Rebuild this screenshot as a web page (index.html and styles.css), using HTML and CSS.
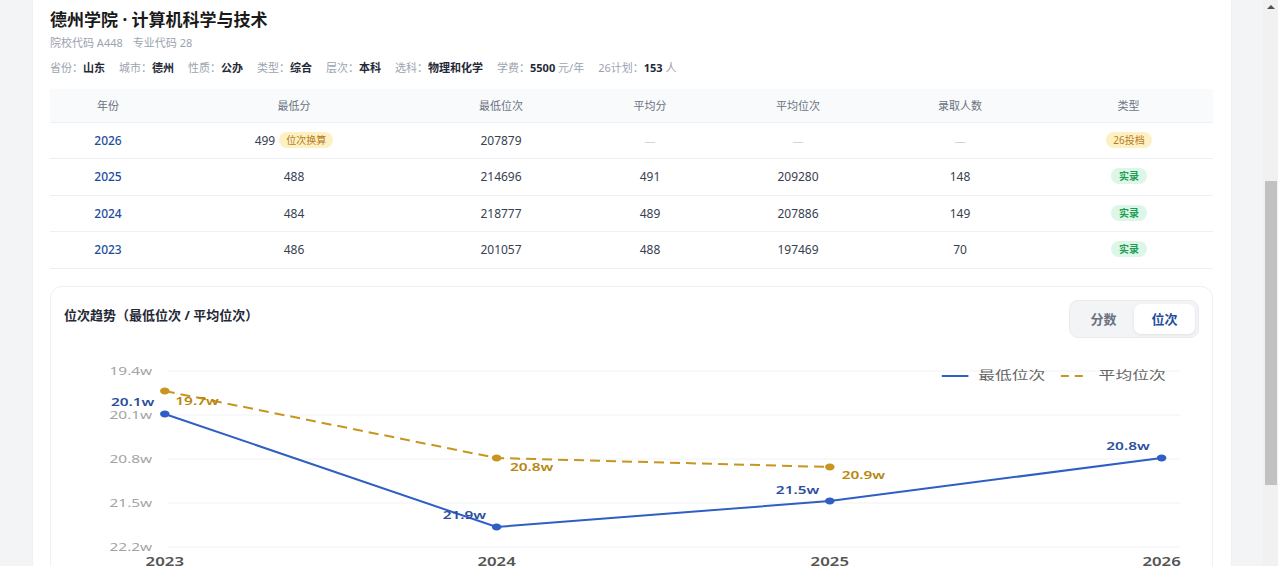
FILE: index.html
```html
<!DOCTYPE html>
<html lang="zh-CN">
<head>
<meta charset="utf-8">
<title>德州学院 · 计算机科学与技术</title>
<link rel="stylesheet" href="styles.css">
</head>
<body>
<div class="page">
  <div class="main">
    <div class="card">
      <h1 class="title">德州学院 · 计算机科学与技术</h1>
      <div class="codes"><span>院校代码 A448</span><span>专业代码 28</span></div>
      <div class="info">
        <span><i>省份：</i><b>山东</b></span>
        <span><i>城市：</i><b>德州</b></span>
        <span><i>性质：</i><b>公办</b></span>
        <span><i>类型：</i><b>综合</b></span>
        <span><i>层次：</i><b>本科</b></span>
        <span><i>选科：</i><b>物理和化学</b></span>
        <span><i>学费：</i><b>5500</b> <i>元/年</i></span>
        <span><i>26计划：</i><b>153</b> <i>人</i></span>
      </div>

      <table class="tbl">
        <colgroup>
          <col class="c1"><col class="c2"><col class="c3"><col class="c4"><col class="c5"><col class="c6"><col class="c7">
        </colgroup>
        <thead>
          <tr><th>年份</th><th>最低分</th><th>最低位次</th><th>平均分</th><th>平均位次</th><th>录取人数</th><th>类型</th></tr>
        </thead>
        <tbody>
          <tr><td class="yr">2026</td><td>499 <span class="chip chip-y">位次换算</span></td><td>207879</td><td class="dash">—</td><td class="dash">—</td><td class="dash">—</td><td><span class="chip chip-y">26投档</span></td></tr>
          <tr><td class="yr">2025</td><td>488</td><td>214696</td><td>491</td><td>209280</td><td>148</td><td><span class="chip chip-g">实录</span></td></tr>
          <tr><td class="yr">2024</td><td>484</td><td>218777</td><td>489</td><td>207886</td><td>149</td><td><span class="chip chip-g">实录</span></td></tr>
          <tr><td class="yr">2023</td><td>486</td><td>201057</td><td>488</td><td>197469</td><td>70</td><td><span class="chip chip-g">实录</span></td></tr>
        </tbody>
      </table>

      <div class="chart-card">
        <div class="chart-head">
          <h2 class="chart-title">位次趋势（最低位次 / 平均位次）</h2>
          <div class="toggle">
            <span class="tg">分数</span>
            <span class="tg tg-on">位次</span>
          </div>
        </div>
        <svg class="chart" width="1134" height="230" viewBox="0 0 810 230" preserveAspectRatio="none">
          <g class="grid">
            <line x1="74" y1="24" x2="797" y2="24"/>
            <line x1="74" y1="68" x2="797" y2="68"/>
            <line x1="74" y1="112" x2="797" y2="112"/>
            <line x1="74" y1="156" x2="797" y2="156"/>
            <line x1="74" y1="200" x2="797" y2="200"/>
          </g>
          <g class="ylab">
            <text x="63" y="28">19.4w</text>
            <text x="63" y="72">20.1w</text>
            <text x="63" y="116">20.8w</text>
            <text x="63" y="160">21.5w</text>
            <text x="63" y="204">22.2w</text>
          </g>
          <g class="xlab">
            <text x="72" y="219">2023</text>
            <text x="309" y="219">2024</text>
            <text x="547" y="219">2025</text>
            <text x="784" y="219">2026</text>
          </g>
          <polyline class="ln-avg" points="72,44 309,111 547,120"/>
          <polyline class="ln-min" points="72,67 309,180 547,154 784,111"/>
          <g class="dot-avg">
            <circle cx="72" cy="44" r="3.4"/>
            <circle cx="309" cy="111" r="3.4"/>
            <circle cx="547" cy="120" r="3.4"/>
          </g>
          <g class="dot-min">
            <circle cx="72" cy="67" r="3.4"/>
            <circle cx="309" cy="180" r="3.4"/>
            <circle cx="547" cy="154" r="3.4"/>
            <circle cx="784" cy="111" r="3.4"/>
          </g>
          <g class="lab-min">
            <text x="49" y="59">20.1w</text>
            <text x="286" y="172">21.9w</text>
            <text x="524" y="147">21.5w</text>
            <text x="760" y="103">20.8w</text>
          </g>
          <g class="lab-avg">
            <text x="95" y="58">19.7w</text>
            <text x="334" y="124">20.8w</text>
            <text x="571" y="132">20.9w</text>
          </g>
          <g class="legend">
            <line class="lg-min" x1="627" y1="29" x2="646" y2="29"/>
            <text x="653" y="33">最低位次</text>
            <line class="lg-avg" x1="712" y1="29" x2="730" y2="29"/>
            <text x="739" y="33">平均位次</text>
          </g>
        </svg>
      </div>
    </div>
  </div>
  <div class="scrollbar">
    <div class="sb-arrow"></div>
    <div class="sb-thumb"></div>
  </div>
</div>
</body>
</html>
```

FILE: styles.css
```css
* { box-sizing: border-box; }
html, body { margin: 0; padding: 0; }
body {
  font-family: "Noto Sans", "Noto Sans CJK SC", sans-serif;
  color: #1f2937;
  background: #f3f4f6;
}
.page {
  display: flex;
  width: 1278px;
  height: 566px;
  overflow: hidden;
}
.main {
  flex: 1;
  background: #f3f4f6;
  padding: 0 32px 0 33px;
  overflow: hidden;
}
.card {
  background: #fff;
  padding: 8px 18px 20px 17px;
  min-height: 700px;
  box-shadow: 0 0 2px rgba(0,0,0,0.05);
}
.title {
  margin: 0;
  font-size: 17px;
  line-height: 24px;
  font-weight: 700;
  color: #1a1a1a;
}
.codes {
  margin-top: 3px;
  font-size: 11px;
  line-height: 16px;
  color: #9ca3af;
  display: flex;
  gap: 10px;
}
.info {
  margin-top: 9px;
  font-size: 11px;
  line-height: 16px;
  display: flex;
  gap: 14px;
}
.info i { font-style: normal; color: #9ca3af; }
.info b { font-weight: 700; color: #1f2937; }

.tbl {
  margin-top: 13px;
  width: 1163px;
  border-collapse: collapse;
  table-layout: fixed;
  font-size: 12px;
}
.c1 { width: 116px; }
.c2 { width: 256px; }
.c3 { width: 158px; }
.c4 { width: 140px; }
.c5 { width: 156px; }
.c6 { width: 168px; }
.c7 { width: 169px; }
.tbl th {
  height: 33px;
  background: #f8fafc;
  color: #6b7280;
  font-size: 11px;
  font-weight: 400;
  border-bottom: 1px solid #edf0f4;
  padding: 0;
  text-align: center;
}
.tbl td {
  height: 36.5px;
  padding: 0;
  text-align: center;
  color: #374151;
  border-bottom: 1px solid #eceff3;
}
.tbl td.yr { color: #1e4d9b; font-weight: 500; }
.tbl td.dash { color: #d1d5db; font-size: 11px; }
.chip {
  display: inline-block;
  font-size: 10px;
  line-height: 16px;
  height: 16px;
  padding: 0 7px;
  border-radius: 999px;
  vertical-align: 1px;
  margin-left: 1px;
}
.chip-y { background: #fdf1c4; color: #b7791f; }
.chip-g { background: #dcf7e7; color: #1f9d55; font-weight: 700; padding: 0 8px; }

.chart-card {
  margin-top: 17px;
  border: 1px solid #edf0f4;
  border-radius: 12px;
  padding: 13px 13px 0 13px;
  height: 320px;
  overflow: hidden;
}
.chart-head {
  display: flex;
  justify-content: space-between;
  align-items: flex-start;
}
.chart-title {
  margin: 5px 0 0 0;
  font-size: 13px;
  line-height: 20px;
  font-weight: 700;
  color: #1f2937;
}
.toggle {
  display: flex;
  width: 130px;
  height: 38px;
  padding: 3px;
  background: #f3f4f6;
  border: 1px solid #e8ebf0;
  border-radius: 9px;
}
.tg {
  flex: 1;
  display: flex;
  align-items: center;
  justify-content: center;
  font-size: 13px;
  font-weight: 600;
  color: #6b7280;
  border-radius: 7px;
}
.tg-on {
  background: #fff;
  color: #1e4d9b;
  font-weight: 700;
  box-shadow: 0 1px 3px rgba(0,0,0,0.08);
}
.chart {
  display: block;
  margin-top: 9px;
  overflow: visible;
}
.chart text { font-family: "Noto Sans", "Noto Sans CJK SC", sans-serif; }
.grid line { stroke: #f1f2f4; stroke-width: 1; vector-effect: non-scaling-stroke; }
.ylab text { font-size: 11px; fill: #a3a3a3; text-anchor: end; }
.xlab text { font-size: 12px; fill: #555; text-anchor: middle; font-weight: 600; }
.ln-min { fill: none; stroke: #2f5ec4; stroke-width: 2; vector-effect: non-scaling-stroke; }
.ln-avg { fill: none; stroke: #c8951e; stroke-width: 2; stroke-dasharray: 10 6; vector-effect: non-scaling-stroke; }
.dot-min circle { fill: #2f5ec4; }
.dot-avg circle { fill: #c8951e; }
.lab-min text { font-size: 11px; fill: #2c4f9e; font-weight: 600; text-anchor: middle; }
.lab-avg text { font-size: 11px; fill: #b8860b; font-weight: 600; text-anchor: middle; }
.legend text { font-size: 12px; fill: #666; }
.lg-min { stroke: #2f5ec4; stroke-width: 2; vector-effect: non-scaling-stroke; }
.lg-avg { stroke: #c8951e; stroke-width: 2; stroke-dasharray: 8 6; vector-effect: non-scaling-stroke; }

.scrollbar {
  width: 15px;
  flex: none;
  background: #f1f1f1;
  padding: 0 1px 0 2px;
  display: flex;
  flex-direction: column;
}
.sb-arrow {
  width: 0;
  height: 0;
  margin: 5px auto 0 auto;
  border-left: 4px solid transparent;
  border-right: 4px solid transparent;
  border-bottom: 4px solid #505050;
}
.sb-thumb {
  margin-top: 172px;
  height: 304px;
  background: #c1c1c1;
}
```
